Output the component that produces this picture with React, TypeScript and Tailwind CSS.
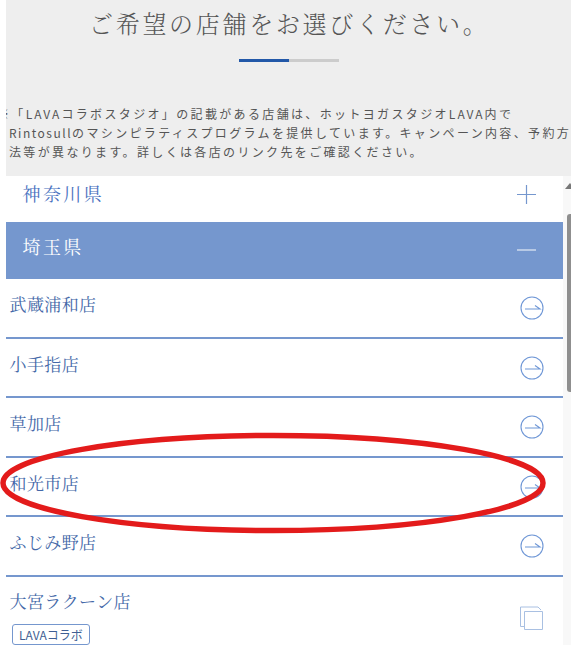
const sans = "font-['Noto_Sans_CJK_JP','Noto_Sans',sans-serif]";
const serif = "font-['Noto_Serif_CJK_JP','Liberation_Serif','Noto_Sans_CJK_JP',serif]";

function ArrowCircle() {
  return (
    <svg width="24" height="24" viewBox="0 0 24 24" fill="none" stroke="#6f97d6" strokeWidth="1.1">
      <circle cx="12" cy="12" r="11" />
      <path d="M5 13H20L15 9.5" />
    </svg>
  );
}

function CopyIcon() {
  return (
    <svg width="25" height="25" viewBox="0 0 25 25" fill="none" stroke="#a9c0e2" strokeWidth="1">
      <path d="M5 20.5H1.5V1H19L22 4" />
      <path d="M5.5 5.5H23.5V23.5H5.5Z" fill="#fff" />
    </svg>
  );
}

function Store({ name }: { name: string }) {
  return (
    <li className="flex h-[59.5px] items-start justify-between border-b-2 border-[#7597ce] pl-[3.5px] pr-[19px] last:border-b-0">
      <div>
        <p className={`mt-[13px] text-[17px] leading-[24px] tracking-[0.4px] text-[#4468a8] ${serif}`}>{name}</p>
      </div>
      <div className="mt-[17px]">
        <ArrowCircle />
      </div>
    </li>
  );
}

export default function App() {
  return (
    <div className={`relative h-[657px] w-[571px] overflow-hidden bg-white pl-[6px] ${sans}`}>
      <header className="h-[176px] overflow-hidden bg-[#eeeeee] pt-[3px]">
        <h1 className={`ml-[83px] whitespace-nowrap text-[24px] font-light leading-[40px] tracking-[2.7px] text-[#555555] ${serif}`}>
          ご希望の店舗をお選びください。
        </h1>
        <div className="ml-[233px] mt-[16px] flex h-[3px] w-[100px]">
          <div className="w-1/2 bg-[#2258a8]" />
          <div className="w-1/2 bg-[#cccccc]" />
        </div>
        <div className="mt-[42px] w-[600px] text-[12px] leading-[19px] tracking-[2.35px] text-[#555555]">
          <p className="-ml-[9px] whitespace-nowrap">
            ※「<span className="tracking-[2px]">LAVA</span>コラボスタジオ」の記載がある店舗は、ホットヨガスタジオ<span className="tracking-[2px]">LAVA</span>内で
          </p>
          <p className="ml-[3px] whitespace-nowrap">
            <span className="tracking-[1.5px]">Rintosull</span>のマシンピラティスプログラムを提供しています。キャンペーン内容、予約方
          </p>
          <p className="ml-[3px] whitespace-nowrap">法等が異なります。詳しくは各店のリンク先をご確認ください。</p>
        </div>
      </header>

      <div className="flex">
        <main className="w-[557px]">
          <div className="flex h-[46px] items-start justify-between pl-[16.5px] pr-[27px] pt-[3px] text-[#4a72c0]">
            <span className={`text-[18px] leading-[28px] tracking-[2.4px] ${serif}`}>神奈川県</span>
            <svg className="mt-[6px]" width="19" height="19" viewBox="0 0 19 19" stroke="#7597ce" strokeWidth="1.2">
              <path d="M0 9.5H19M9.5 0V19" />
            </svg>
          </div>
          <div className="flex h-[57px] items-start justify-between bg-[#7597ce] pl-[16.5px] pr-[27px] pt-[10px] text-white">
            <span className={`text-[18px] leading-[28px] tracking-[2.4px] ${serif}`}>埼玉県</span>
            <svg className="mt-[17px]" width="19" height="2" viewBox="0 0 19 2" stroke="#ffffff" strokeOpacity="0.8" strokeWidth="1.2">
              <path d="M0 1H19" />
            </svg>
          </div>
          <ul>
            <Store name="武蔵浦和店" />
            <Store name="小手指店" />
            <Store name="草加店" />
            <Store name="和光市店" />
            <Store name="ふじみ野店" />
            <li className="flex items-start justify-between pl-[3.5px] pr-[19px]">
              <div>
                <p className={`mt-[12px] text-[17px] leading-[24px] tracking-[0.4px] text-[#4468a8] ${serif}`}>大宮ラクーン店</p>
                <span className="ml-[2.5px] mt-[11px] inline-block h-[21px] rounded-[3px] border border-[#7597ce] px-[6px] text-[12px] leading-[19px] text-[#3f5f94]">
                  LAVAコラボ
                </span>
              </div>
              <div className="mt-[29px]">
                <CopyIcon />
              </div>
            </li>
          </ul>
        </main>
        <aside className="relative w-[8px] bg-[#f8f8f8]">
          <div className="absolute left-[2px] top-[7px] h-0 w-0 border-x-[5px] border-b-[6px] border-x-transparent border-b-[#777777]" />
          <div className="absolute left-[4px] top-[38px] h-[178px] w-[6px] rounded-[4px] bg-[#8f8f8f]" />
        </aside>
      </div>

      <svg className="pointer-events-none absolute left-0 top-0" width="571" height="657" fill="none">
        <ellipse cx="273" cy="483" rx="270" ry="47.5" stroke="#e31b1b" strokeWidth="5.5" />
      </svg>
    </div>
  );
}
